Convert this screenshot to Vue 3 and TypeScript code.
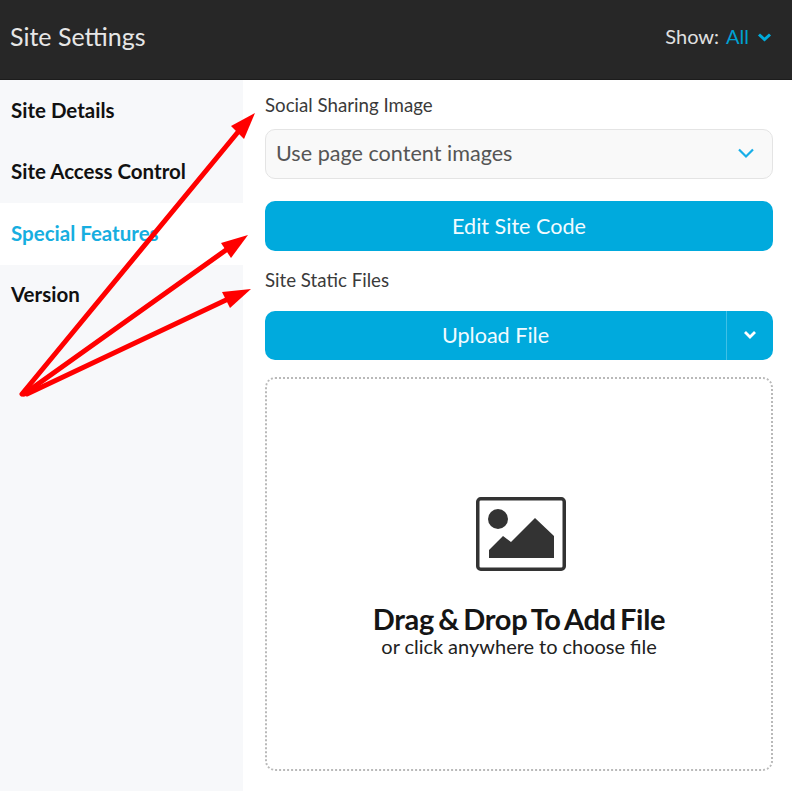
<script setup lang="ts">
const navItems = [
  { label: 'Site Details', active: false },
  { label: 'Site Access Control', active: false },
  { label: 'Special Features', active: true },
  { label: 'Version', active: false },
]
const arrows = [
  { x1: 22, x2: 238, y2: 132, p: '255,113 231,126 244,139' },
  { x1: 24, x2: 226, y2: 250, p: '248,235 221,243 231,258' },
  { x1: 27, x2: 226, y2: 300, p: '251,289 222,292 230,308' },
]
</script>

<template>
  <div class="page">
    <header class="topbar">
      <h1 class="title">Site Settings</h1>
      <div class="show">
        <span>Show:</span>
        <span class="show-value">All</span>
        <svg class="show-chevron" viewBox="0 0 15 10" width="15" height="10">
          <path d="M2 2.5 7.5 7.5 13 2.5" fill="none" stroke="currentColor" stroke-width="3" />
        </svg>
      </div>
    </header>
    <div class="body">
      <nav class="sidebar">
        <div v-for="item in navItems" :key="item.label" class="nav-item" :class="{ active: item.active }">
          {{ item.label }}
        </div>
      </nav>
      <main class="content">
        <label class="label first">Social Sharing Image</label>
        <div class="select">
          <span>Use page content images</span>
          <svg viewBox="0 0 18 12" width="18" height="12" class="select-chevron">
            <path d="M2 2.5 9 9.5 16 2.5" fill="none" stroke="currentColor" stroke-width="2.2" />
          </svg>
        </div>
        <button class="btn edit">Edit Site Code</button>
        <label class="label second">Site Static Files</label>
        <div class="split">
          <div class="split-main">Upload File</div>
          <div class="split-toggle">
            <svg viewBox="0 0 14 10" width="14" height="10">
              <path d="M2 2 7 7 12 2" fill="none" stroke="#fff" stroke-width="2.8" />
            </svg>
          </div>
        </div>
        <div class="drop">
          <svg class="drop-icon" viewBox="0 0 92 75" width="92" height="75">
            <rect x="2.75" y="1.75" width="86.5" height="70.5" rx="3" fill="none" stroke="#333" stroke-width="3.5" />
            <circle cx="23" cy="22" r="10" fill="#333" />
            <path d="M14 61V53L28 39 36 45 60 21 79 39V61Z" fill="#333" />
          </svg>
          <div class="drop-title">Drag &amp; Drop To Add File</div>
          <div class="drop-sub">or click anywhere to choose file</div>
        </div>
      </main>
    </div>
    <svg class="arrows" viewBox="0 0 792 791" width="792" height="791">
      <g v-for="a in arrows" :key="a.x2 + a.y2">
        <line :x1="a.x1" y1="394" :x2="a.x2" :y2="a.y2" stroke="#f00" stroke-width="5" stroke-linecap="round" />
        <polygon :points="a.p" fill="#f00" />
      </g>
    </svg>
  </div>
</template>

<style>
html, body { margin: 0; background: #fff; }
</style>

<style scoped>
.page {
  position: relative;
  width: 792px;
  height: 791px;
  overflow: hidden;
  font-family: Lato, "Liberation Sans", sans-serif;
  background: #fff;
}
.topbar {
  height: 80px;
  box-sizing: border-box;
  background: #272727;
  border-bottom: 1px solid #1c1c1c;
  display: flex;
  align-items: center;
  justify-content: space-between;
  padding: 0 20px 8px 10px;
}
.title {
  margin: 0;
  font-size: 25px;
  font-weight: 400;
  color: #e6e6e6;
}
.show {
  display: flex;
  align-items: center;
  gap: 7px;
  font-size: 20px;
  color: #e0e0e0;
}
.show-value { color: #00a0d2; }
.show-chevron { color: #00acdc; margin-top: 3px; margin-left: 1px; }
.body { display: flex; height: 711px; }
.sidebar {
  width: 243px;
  flex: none;
  background: #f7f8fa;
}
.nav-item {
  height: 61.5px;
  box-sizing: border-box;
  display: flex;
  align-items: center;
  padding: 0 0 2px 11px;
  font-size: 20.5px;
  font-weight: 700;
  color: #111;
}
.nav-item.active { background: #fff; color: #17aee0; }
.content {
  flex: 1;
  padding: 0 19px 0 22px;
  display: flex;
  flex-direction: column;
  min-width: 0;
}
.label {
  font-size: 18.7px;
  line-height: 22px;
  color: #3a3a3a;
}
.label.first { margin-top: 14px; }
.label.second { margin-top: 18px; }
.select {
  margin-top: 13px;
  height: 49.5px;
  box-sizing: border-box;
  border: 1px solid #e4e4e4;
  border-radius: 10px;
  background: #f9f9f9;
  display: flex;
  align-items: center;
  justify-content: space-between;
  padding: 0 17px 1px 10px;
  font-size: 21.6px;
  color: #555;
}
.select-chevron { color: #17aee8; }
.btn, .split {
  height: 49.5px;
  box-sizing: border-box;
  border-radius: 10px;
  background: #00aadd;
  color: #f2fbff;
  font-size: 21.6px;
}
.btn {
  margin-top: 22.5px;
  border: 0;
  width: 100%;
  padding: 1px 0 0;
  font-family: inherit;
}
.split {
  margin-top: 20px;
  display: flex;
}
.split-main {
  flex: 1;
  display: flex;
  align-items: center;
  justify-content: center;
}
.split-toggle {
  width: 46px;
  border-left: 1px solid #3fc0e6;
  display: flex;
  align-items: center;
  justify-content: center;
}
.drop {
  margin-top: 16.5px;
  height: 394px;
  box-sizing: border-box;
  border: 2px dotted #b9b9b9;
  border-radius: 10px;
  display: flex;
  flex-direction: column;
  align-items: center;
  padding-top: 118px;
}
.drop-icon { margin-left: 4px; }
.drop-title {
  margin-top: 30px;
  font-size: 29px;
  line-height: 34px;
  font-weight: 700;
  color: #151515;
  letter-spacing: -0.3px;
  word-spacing: -2.5px;
}
.drop-sub {
  font-size: 20px;
  line-height: 20px;
  color: #222;
  word-spacing: -0.2px;
}
.arrows {
  position: absolute;
  inset: 0;
  pointer-events: none;
}
</style>
